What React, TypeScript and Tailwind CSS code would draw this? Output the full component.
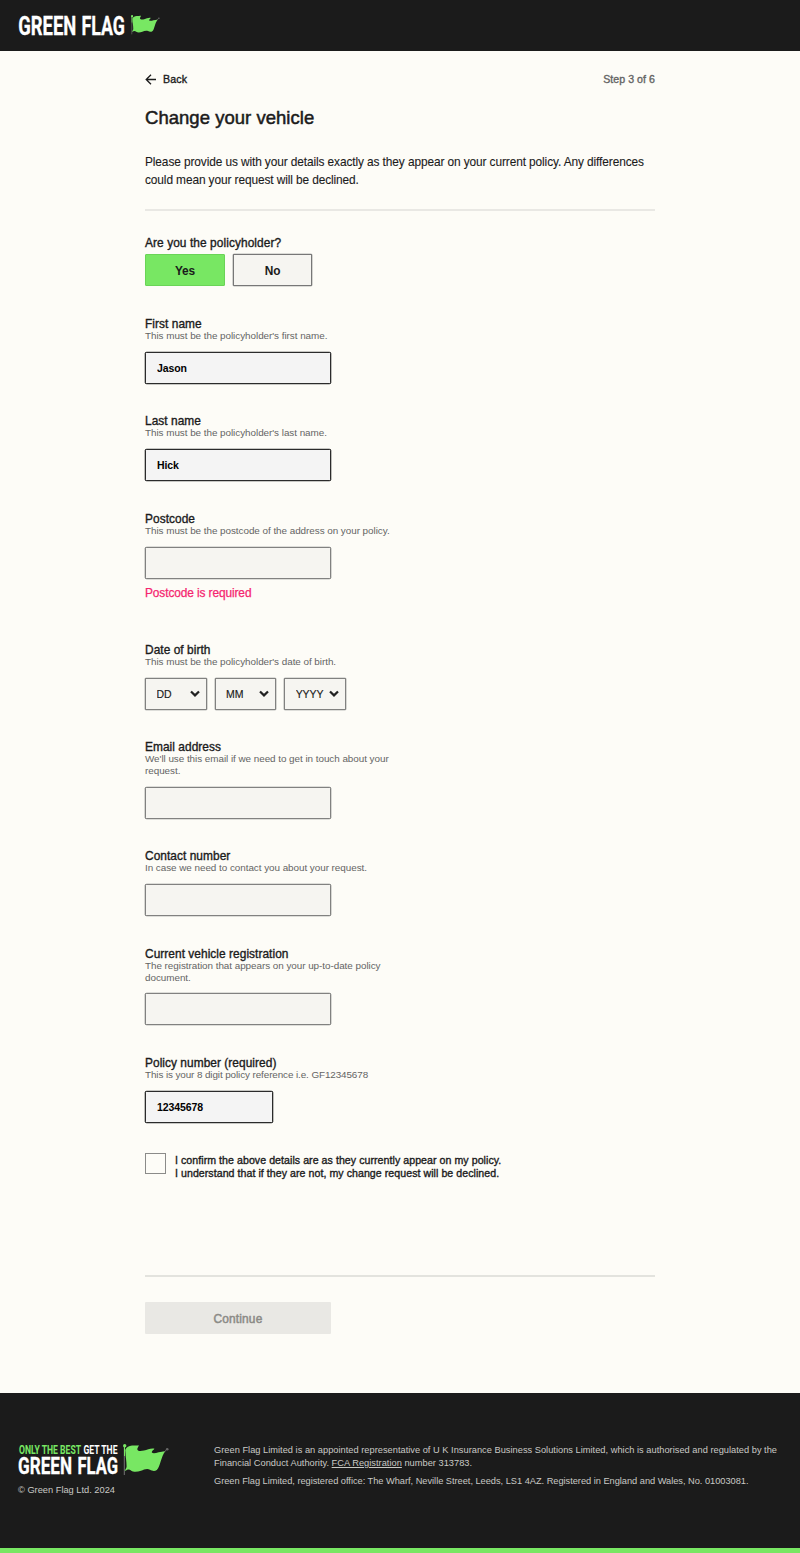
import type { ReactNode } from "react";

const medium = "[-webkit-text-stroke:0.35px_currentColor]";

function Flag({ className }: { className: string }) {
  return (
    <svg className={className} viewBox="0 0 46 32" fill="none" preserveAspectRatio="none" aria-hidden="true">
      <path d="M1.300 2.500V31" stroke="#747474" strokeWidth="1" />
      <path d="M1.500 2V12" stroke="#78e763" strokeWidth="1" />
      <circle cx="1.700" cy="1.800" r="1.700" fill="#78e763" />
      <path
        d="M2.200 6C3.500 3.200 6 2 9 1.600 11.500 1.300 14 1.600 15.800 1.200 15.500 2.800 14 4 14.400 5.800 15 7.400 18 7.200 21 6.600 24.500 5.800 27.500 4 31.500 4.700 30.500 6 28.500 7 28.800 8.600 31 10.200 35.500 8 42.500 7 40 10 39 13.500 37.800 17 36.500 21 35.500 24.500 33.800 26 31.500 27.600 29 26.800 27 25.700 24 24.200 21 25.600 18 26.800 14.500 28 10.500 28.400 8.300 26.800 6.500 25 4.800 24.800 1.800 27 2.300 25 3.500 24.200 3.600 22.500 3.600 17 2.600 13 2.500 9Z"
        fill="#78e763"
      />
      <path d="M41 8 43.500 5.800" stroke="#747474" strokeWidth="0.800" />
      <circle cx="44.200" cy="5.300" r="1.300" fill="#666" />
    </svg>
  );
}

function Field({
  label,
  hint,
  children,
  className = "",
}: {
  label: string;
  hint: ReactNode;
  children: ReactNode;
  className?: string;
}) {
  return (
    <div className={`pb-[30.7px] ${className}`}>
      <div className={`h-[13px] pt-[1px] text-[11.9px] leading-[13px] tracking-[0.05px] ${medium}`}>{label}</div>
      <div className="text-[9.9px] leading-[11.6px] tracking-[-0.04px] text-[#646464]">{hint}</div>
      <div className="mt-[10px] flex gap-2">{children}</div>
    </div>
  );
}

function TextInput({ value, className = "w-[186px]" }: { value?: string; className?: string }) {
  return (
    <input
      type="text"
      defaultValue={value}
      className={`h-[32.2px] rounded-[1.5px] border px-[11px] text-[10.5px] font-bold tracking-[-0.08px] text-black outline-none ${
        value ? "border-[#2b2b2b] bg-[#f4f4f4] shadow-[0_0_0_0.3px_#2b2b2b]" : "border-[#818180] bg-[#f6f5f1] shadow-[0_0_0_0.3px_#818180]"
      } ${className}`}
    />
  );
}

function DateSelect({ value }: { value: string }) {
  return (
    <div className="relative">
      <select className="h-[32.2px] w-[61.6px] appearance-none rounded-[1px] border border-[#818180] bg-[#f6f5f1] pl-[10.5px] pt-[2px] text-[10.5px] tracking-[-0.1px] text-[#1b1b1b] shadow-[0_0_0_0.3px_#818180] [-webkit-text-stroke:0.15px_currentColor]">
        <option>{value}</option>
      </select>
      <svg className="pointer-events-none absolute right-[7px] top-[12px] h-[8px] w-[10px]" viewBox="0 0 10 8" fill="none">
        <path d="M1 1.500 5 5.400 9 1.500" stroke="#222" strokeWidth="2.200" />
      </svg>
    </div>
  );
}

export default function App() {
  return (
    <div className="flex h-[1553px] w-[800px] flex-col bg-[#fdfcf7] font-['Liberation_Sans',Arial,sans-serif] text-[#1b1b1b]">
      <header className="h-[51px] shrink-0 bg-[#1b1b1b] pl-[18px] pt-[10px]">
        <div className="flex items-start">
          <svg className="h-[34px] w-[110px] overflow-visible" viewBox="0 0 110 34" fontFamily="Roboto" fontWeight="700" fontSize="25.500" fill="#fff" stroke="#fff" strokeWidth="0.300">
            <text x="0.300" y="25" textLength="58" lengthAdjust="spacingAndGlyphs">GREEN</text>
            <text x="63.500" y="25" textLength="43.500" lengthAdjust="spacingAndGlyphs">FLAG</text>
          </svg>
          <Flag className="ml-[3px] mt-[5px] h-[20px] w-[29px]" />
        </div>
      </header>

      <main className="mx-auto w-[510px] flex-1">
        <div className={`mt-[21px] flex h-[16px] items-center justify-between text-[10.6px] ${medium}`}>
          <a className="flex items-center">
            <svg className="h-[12px] w-[12px]" viewBox="0 0 12 12" fill="none">
              <path d="M11 5.500H1.500M6 0.700 1.200 5.500 6 10.300" stroke="#1b1b1b" strokeWidth="1.300" />
            </svg>
            <span className="ml-[6px] tracking-[0.15px]">Back</span>
          </a>
          <span className="tracking-[0.05px] text-[#646464]">Step 3 of 6</span>
        </div>
        <h1 className="mt-[18px] text-[18.500px] leading-[24px] tracking-[0.03px] [-webkit-text-stroke:0.5px_currentColor]">Change your vehicle</h1>
        <p className="mt-[23px] text-[11.9px] leading-[18px] tracking-[-0.105px] [-webkit-text-stroke:0.1px_currentColor]">
          Please provide us with your details exactly as they appear on your current policy. Any differences
          <br />
          could mean your request will be declined.
        </p>
        <hr className="mt-[20px] h-[2px] border-0 bg-[#e9e8e4]" />

        <div className={`mt-[25px] text-[11.9px] leading-[14px] tracking-[0.08px] ${medium}`}>Are you the policyholder?</div>
        <div className="mt-[4px] flex gap-2 text-[11.9px] font-bold tracking-[-0.1px]">
          <button className="h-[32px] w-[80px] rounded-[1px] border border-[#6ad457] bg-[#78e763] pt-[4px]">Yes</button>
          <button className="h-[32px] w-[79px] rounded-[1px] border border-[#777] bg-[#f6f5f1] pt-[4px] shadow-[0_0_0_0.3px_#777]">No</button>
        </div>

        <div className="mt-[31px]">
          <Field label="First name" hint="This must be the policyholder's first name.">
            <TextInput value="Jason" />
          </Field>
          <Field label="Last name" hint="This must be the policyholder's last name.">
            <TextInput value="Hick" />
          </Field>
          <Field label="Postcode" hint="This must be the postcode of the address on your policy." className="pb-[7px]!">
            <TextInput />
          </Field>
          <div className="h-[57.200px] text-[11.9px] leading-[15px] tracking-[-0.1px] text-[#f5256f] [-webkit-text-stroke:0.25px_currentColor]">Postcode is required</div>
          <Field label="Date of birth" hint="This must be the policyholder's date of birth.">
            <DateSelect value="DD" />
            <DateSelect value="MM" />
            <DateSelect value="YYYY" />
          </Field>
          <Field label="Email address" hint={<>We'll use this email if we need to get in touch about your<br />request.</>}>
            <TextInput />
          </Field>
          <Field label="Contact number" hint="In case we need to contact you about your request.">
            <TextInput />
          </Field>
          <Field label="Current vehicle registration" hint={<>The registration that appears on your up-to-date policy<br />document.</>}>
            <TextInput />
          </Field>
          <Field label="Policy number (required)" hint={<span className="tracking-[-0.1px]">This is your 8 digit policy reference i.e. GF12345678</span>}>
            <TextInput value="12345678" className="w-[128px]" />
          </Field>
        </div>

        <label className="flex h-[122px] items-start">
          <input type="checkbox" className="h-[21px] w-[21px] appearance-none border border-[#8b8b89]" />
          <span className={`ml-[9px] mt-[1px] text-[10.6px] leading-[12.500px] tracking-[0.055px] ${medium}`}>
            I confirm the above details are as they currently appear on my policy.
            <br />I understand that if they are not, my change request will be declined.
          </span>
        </label>
        <hr className="h-[1.500px] border-0 bg-[#e3e3de]" />
        <button className="mt-[25.500px] h-[32px] w-[186px] rounded-[1px] bg-[#e9e8e4] pt-[2px] text-[11.9px] tracking-[0.15px] text-[#8c8b87] [-webkit-text-stroke:0.5px_currentColor]">Continue</button>
      </main>

      <footer className="flex h-[160px] shrink-0 border-b-[5px] border-[#78e763] bg-[#1b1b1b] pl-[18px] pt-[48px] text-[9.27px] text-[#c9c9c5]">
        <div className="w-[196px] shrink-0">
          <div className="flex">
            <svg className="h-[38px] w-[103px] overflow-visible" viewBox="0 0 103 38" fontFamily="Roboto" fontWeight="700">
              <text x="1" y="12.700" fontSize="12" textLength="62" lengthAdjust="spacingAndGlyphs" fill="#78e763">ONLY THE BEST</text>
              <text x="65.500" y="12.700" fontSize="12" textLength="34" lengthAdjust="spacingAndGlyphs" fill="#fff">GET THE</text>
              <text x="0" y="33" fontSize="24" textLength="54" lengthAdjust="spacingAndGlyphs" fill="#fff" stroke="#fff" strokeWidth="0.300">GREEN</text>
              <text x="59.500" y="33" fontSize="24" textLength="40.500" lengthAdjust="spacingAndGlyphs" fill="#fff" stroke="#fff" strokeWidth="0.300">FLAG</text>
            </svg>
            <Flag className="ml-[2px] mt-[3px] h-[32px] w-[46px]" />
          </div>
          <div className="mt-[5px] leading-[12px]">© Green Flag Ltd. 2024</div>
        </div>
        <div className="whitespace-nowrap pt-[3px] leading-[12.500px]">
          <p className="tracking-[0.012px]">
            Green Flag Limited is an appointed representative of U K Insurance Business Solutions Limited, which is authorised and regulated by the
            <br />
            Financial Conduct Authority. <a className="underline">FCA Registration</a> number 313783.
          </p>
          <p className="mt-[6px] tracking-[-0.028px]">
            Green Flag Limited, registered office: The Wharf, Neville Street, Leeds, LS1 4AZ. Registered in England and Wales, No. 01003081.
          </p>
        </div>
      </footer>
    </div>
  );
}
